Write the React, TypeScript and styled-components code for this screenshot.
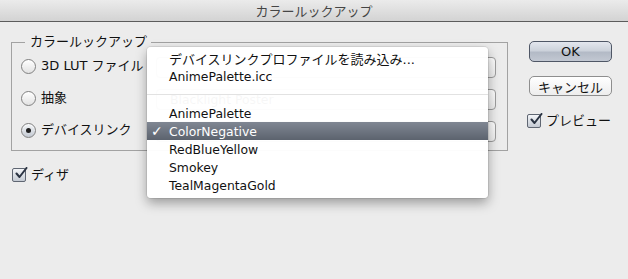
import React from "react";
import styled, { createGlobalStyle, css } from "styled-components";

const GlobalStyle = createGlobalStyle`
  html, body { margin: 0; padding: 0; background: #ececec; }
  body { font-family: "DejaVu Sans", "Noto Sans CJK JP", sans-serif; color: #111; }
  * { box-sizing: border-box; }
`;

const jp = `"DejaVu Sans", "Noto Sans CJK JP", sans-serif`;

const Window = styled.div`
  position: relative;
  width: 628px;
  height: 279px;
  background: #ececec;
  overflow: hidden;
`;

const TitleBar = styled.div`
  height: 22px;
  border-bottom: 1px solid #5c5c5c;
  background: linear-gradient(#ebebeb, #d3d3d3);
  display: flex;
  align-items: center;
  justify-content: center;
  font-family: ${jp};
  font-size: 13px;
  color: #454545;
  padding-bottom: 1px;
`;

const Body = styled.div`
  display: flex;
  padding: 12px 0 0 11px;
  gap: 21px;
`;

const LeftColumn = styled.div`
  width: 497px;
  display: flex;
  flex-direction: column;
`;

const Group = styled.fieldset`
  margin: 0;
  border: 1px solid #a2a2a2;
  padding: 7px 11px 8px 9px;
  display: flex;
  flex-direction: column;
  gap: 11px;
  min-width: 0;
`;

const Legend = styled.legend`
  margin-left: 4px;
  padding: 0 4px 0 5px;
  font-family: ${jp};
  font-size: 13px;
  line-height: 16px;
  color: #111;
`;

const OptionRow = styled.div`
  display: flex;
  align-items: center;
  height: 21px;
`;

const RadioCircle = styled.span<{ $checked?: boolean }>`
  width: 15px;
  height: 15px;
  border-radius: 50%;
  border: 1px solid #808080;
  flex: none;
  display: flex;
  align-items: center;
  justify-content: center;
  margin-top: -3px;
  background: ${(p) =>
    p.$checked
      ? "linear-gradient(#f4f6f8, #c3c9d2)"
      : "linear-gradient(#ffffff, #e2e2e2)"};
  box-shadow: inset 0 1px 1px rgba(255, 255, 255, 0.8);
  &::after {
    content: "";
    display: ${(p) => (p.$checked ? "block" : "none")};
    width: 5px;
    height: 5px;
    border-radius: 50%;
    background: #1f1f1f;
  }
`;

const OptionLabel = styled.span`
  flex: 1;
  margin-left: 5px;
  margin-top: -3px;
  font-family: ${jp};
  font-size: 13px;
  line-height: 16px;
  white-space: nowrap;
`;

const PopupButton = styled.div`
  width: 340px;
  height: 21px;
  border: 1px solid #9c9c9c;
  border-radius: 4px;
  background: linear-gradient(#ffffff, #ededed);
  padding-left: 13px;
  display: flex;
  align-items: center;
  font-size: 12.4px;
  color: #111;
  white-space: nowrap;
`;

const CheckRow = styled.label<{ $indent?: number; $top?: number }>`
  display: flex;
  align-items: center;
  margin-left: ${(p) => p.$indent ?? 0}px;
  margin-top: ${(p) => p.$top ?? 0}px;
`;

const CheckBox = styled.span`
  width: 14px;
  height: 14px;
  flex: none;
  border: 1px solid #5f6672;
  border-radius: 2px;
  background: linear-gradient(#f3f5f8, #c4cad3);
  display: flex;
  align-items: center;
  justify-content: center;
  overflow: visible;
`;

const CheckLabel = styled.span`
  margin-left: 5px;
  font-family: ${jp};
  font-size: 13px;
  line-height: 16px;
  white-space: nowrap;
`;

const RightColumn = styled.div`
  width: 84px;
  display: flex;
  flex-direction: column;
  padding-top: 7px;
`;

const Button = styled.div<{ $primary?: boolean }>`
  height: 21px;
  width: 83px;
  display: flex;
  align-items: center;
  justify-content: center;
  font-family: ${jp};
  font-size: 13px;
  color: #111;
  border-radius: 5px;
  ${(p) =>
    p.$primary
      ? css`
          border: 1px solid #4f5766;
          background: linear-gradient(
            #e3e7ee 0%,
            #ccd2db 45%,
            #b3bac6 55%,
            #c2c8d2 100%
          );
        `
      : css`
          border: 1px solid #8e8e8e;
          background: linear-gradient(#ffffff, #ededed);
          margin-top: 14px;
          height: 20px;
        `}
`;

const Menu = styled.div`
  position: absolute;
  left: 147px;
  top: 47px;
  width: 341px;
  padding: 2px 0 4px;
  background: rgba(255, 255, 255, 0.965);
  border-radius: 4px;
  box-shadow: 0 0 0 1px rgba(0, 0, 0, 0.08), 0 5px 12px rgba(0, 0, 0, 0.35);
`;

const MenuItem = styled.div<{ $selected?: boolean; $jp?: boolean }>`
  height: 18px;
  display: flex;
  align-items: center;
  font-family: ${jp};
  font-size: ${(p) => (p.$jp ? "13px" : "12.4px")};
  color: ${(p) => (p.$selected ? "#ffffff" : "#111")};
  background: ${(p) =>
    p.$selected ? "linear-gradient(#808793, #5c636e)" : "transparent"};
  white-space: nowrap;
`;

const CheckColumn = styled.span`
  width: 22px;
  flex: none;
  padding-left: 4px;
  font-size: 14px;
`;

const Separator = styled.div`
  height: 19px;
  display: flex;
  align-items: center;
  &::after {
    content: "";
    display: block;
    width: 100%;
    height: 1px;
    background: #e2e2e2;
  }
`;

const CheckMark = () => (
  <svg width="14" height="14" viewBox="0 0 14 14" style={{ marginTop: -3, marginRight: -3 }}>
    <path
      d="M2.5 6.5 L5.5 10 L12.5 1"
      fill="none"
      stroke="#2a3342"
      strokeWidth="2"
      strokeLinecap="round"
      strokeLinejoin="round"
    />
  </svg>
);

const items = ["AnimePalette", "ColorNegative", "RedBlueYellow", "Smokey", "TealMagentaGold"];

export default function App() {
  return (
    <>
      <GlobalStyle />
      <Window>
        <TitleBar>カラールックアップ</TitleBar>
        <Body>
          <LeftColumn>
            <Group>
              <Legend>カラールックアップ</Legend>
              <OptionRow>
                <RadioCircle />
                <OptionLabel>3D LUT ファイル</OptionLabel>
                <PopupButton />
              </OptionRow>
              <OptionRow>
                <RadioCircle />
                <OptionLabel>抽象</OptionLabel>
                <PopupButton>Blacklight Poster</PopupButton>
              </OptionRow>
              <OptionRow>
                <RadioCircle $checked />
                <OptionLabel>デバイスリンク</OptionLabel>
                <PopupButton>ColorNegative</PopupButton>
              </OptionRow>
            </Group>
            <CheckRow $indent={1} $top={16}>
              <CheckBox>
                <CheckMark />
              </CheckBox>
              <CheckLabel>ディザ</CheckLabel>
            </CheckRow>
          </LeftColumn>
          <RightColumn>
            <Button $primary>OK</Button>
            <Button>キャンセル</Button>
            <CheckRow $indent={-2} $top={17}>
              <CheckBox>
                <CheckMark />
              </CheckBox>
              <CheckLabel>プレビュー</CheckLabel>
            </CheckRow>
          </RightColumn>
        </Body>
        <Menu>
          <MenuItem $jp>
            <CheckColumn />
            デバイスリンクプロファイルを読み込み...
          </MenuItem>
          <MenuItem>
            <CheckColumn />
            AnimePalette.icc
          </MenuItem>
          <Separator />
          {items.map((name) => (
            <MenuItem key={name} $selected={name === "ColorNegative"}>
              <CheckColumn>{name === "ColorNegative" ? "✓" : ""}</CheckColumn>
              {name}
            </MenuItem>
          ))}
        </Menu>
      </Window>
    </>
  );
}
